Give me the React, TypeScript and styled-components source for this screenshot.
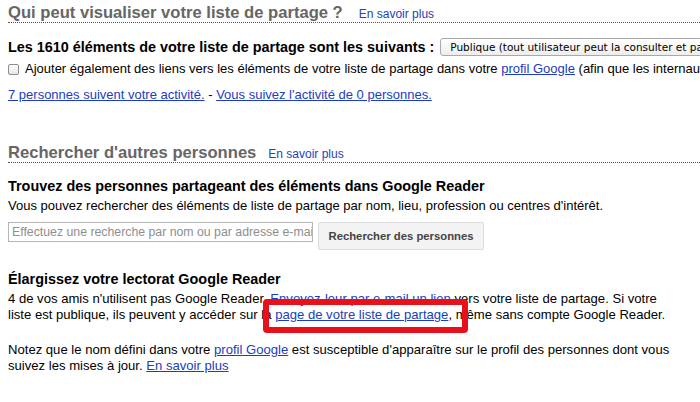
import React from "react";
import styled, { createGlobalStyle } from "styled-components";

const Global = createGlobalStyle`
  html, body { margin: 0; padding: 0; background: #fff; }
  body { font-family: Arial, "Liberation Sans", Helvetica, sans-serif; color: #000; overflow: hidden; }
  * { box-sizing: border-box; }
`;

const Page = styled.div`
  position: relative;
  width: 700px;
  height: 402px;
  overflow: hidden;
  padding: 0 0 0 8px;
`;

const Section = styled.section<{ $top: number }>`
  margin-top: ${(p) => p.$top}px;
`;

const SectionHeader = styled.div<{ $gap: number }>`
  display: flex;
  align-items: baseline;
  gap: ${(p) => p.$gap}px;
  border-bottom: 1px dotted #555;
  white-space: nowrap;
`;

const SectionTitle = styled.h2`
  margin: 0;
  font-size: 16.6px;
  font-weight: bold;
  color: #666;
  line-height: 19px;
`;

const HeaderLink = styled.a`
  font-size: 12px;
  color: #2244bb;
  text-decoration: none;
`;

const SubTitle = styled.div<{ $mt: number }>`
  margin-top: ${(p) => p.$mt}px;
  font-size: 14.4px;
  font-weight: bold;
  line-height: 18px;
  height: 18px;
  white-space: nowrap;
  display: flex;
  align-items: center;
  gap: 6px;
`;

const Row = styled.div<{ $mt: number }>`
  margin-top: ${(p) => p.$mt}px;
  font-size: 13px;
  line-height: 16px;
  white-space: nowrap;
  display: flex;
  align-items: center;
`;

const Para = styled.p<{ $mt: number }>`
  margin: ${(p) => p.$mt}px 0 0 0;
  font-size: 13.1px;
  line-height: 16px;
  width: 670px;
  white-space: nowrap;
`;

const Link = styled.a`
  color: #1a3dc1;
  text-decoration: underline;
`;

const SelectBox = styled.div`
  font-family: "DejaVu Sans", Verdana, sans-serif;
  font-weight: normal;
  font-size: 10.5px;
  border: 1px solid #a9a9a9;
  border-radius: 3px;
  background: linear-gradient(#fff, #ededed);
  height: 18px;
  line-height: 16px;
  padding: 0 9px;
  white-space: nowrap;
`;

const Check = styled.span`
  display: inline-block;
  flex-shrink: 0;
  width: 11px;
  height: 11px;
  border: 1px solid #8d8d8d;
  border-radius: 2px;
  background: linear-gradient(#fff, #e6e6e6);
  margin: 0 6px 0 0;
`;

const SearchRow = styled.div`
  margin-top: 8px;
  display: flex;
  align-items: flex-start;
  gap: 5px;
`;

const SearchInput = styled.div`
  flex-shrink: 0;
  width: 305px;
  height: 20px;
  border: 1px solid #b5b5b5;
  font-size: 12.3px;
  line-height: 18px;
  color: #8e8e8e;
  padding-left: 3px;
  overflow: hidden;
  white-space: nowrap;
`;

const SearchButton = styled.div`
  width: 166px;
  height: 28px;
  border: 1px solid #dcdcdc;
  border-radius: 2px;
  background: #f3f3f3;
  font-size: 11.3px;
  font-weight: bold;
  color: #444;
  line-height: 26px;
  text-align: center;
  white-space: nowrap;
`;

const Highlight = styled.div`
  position: absolute;
  left: 263px;
  top: 299px;
  width: 205px;
  height: 34px;
  border: 6px solid #e8101a;
  border-radius: 4px;
  pointer-events: none;
`;

export default function App() {
  return (
    <>
      <Global />
      <Page>
        <Section $top={3}>
          <SectionHeader $gap={16}>
            <SectionTitle>Qui peut visualiser votre liste de partage ?</SectionTitle>
            <HeaderLink href="#">En savoir plus</HeaderLink>
          </SectionHeader>
          <SubTitle $mt={15}>
            Les 1610 éléments de votre liste de partage sont les suivants :
            <SelectBox>Publique (tout utilisateur peut la consulter et partager)</SelectBox>
          </SubTitle>
          <Row $mt={5}>
            <Check />
            Ajouter également des liens vers les éléments de votre liste de partage dans votre&nbsp;
            <Link href="#">profil Google</Link>&nbsp;(afin que les internautes puissent les voir)
          </Row>
          <Row $mt={10}>
            <Link href="#">7 personnes suivent votre activité.</Link>&nbsp;-&nbsp;
            <Link href="#">Vous suivez l'activité de 0 personnes.</Link>
          </Row>
        </Section>
        <Section $top={40}>
          <SectionHeader $gap={12}>
            <SectionTitle>Rechercher d'autres personnes</SectionTitle>
            <HeaderLink href="#">En savoir plus</HeaderLink>
          </SectionHeader>
          <SubTitle $mt={14}>Trouvez des personnes partageant des éléments dans Google Reader</SubTitle>
          <Row $mt={3}>
            Vous pouvez rechercher des éléments de liste de partage par nom, lieu, profession ou centres d'intérêt.
          </Row>
          <SearchRow>
            <SearchInput>Effectuez une recherche par nom ou par adresse e-mail</SearchInput>
            <SearchButton>Rechercher des personnes</SearchButton>
          </SearchRow>
          <SubTitle $mt={20}>Élargissez votre lectorat Google Reader</SubTitle>
          <Para $mt={3}>
            4 de vos amis n'utilisent pas Google Reader. <Link href="#">Envoyez-leur par e-mail un lien</Link> vers votre liste de partage. Si votre
            <br />
            liste est publique, ils peuvent y accéder sur la{" "}
            <Link href="#">page de votre liste de partage</Link>, même sans compte Google Reader.
          </Para>
          <Para $mt={19}>
            Notez que le nom défini dans votre <Link href="#">profil Google</Link> est susceptible d'apparaître sur le profil des personnes dont vous
            <br />
            suivez les mises à jour. <Link href="#">En savoir plus</Link>
          </Para>
        </Section>
        <Highlight />
      </Page>
    </>
  );
}
